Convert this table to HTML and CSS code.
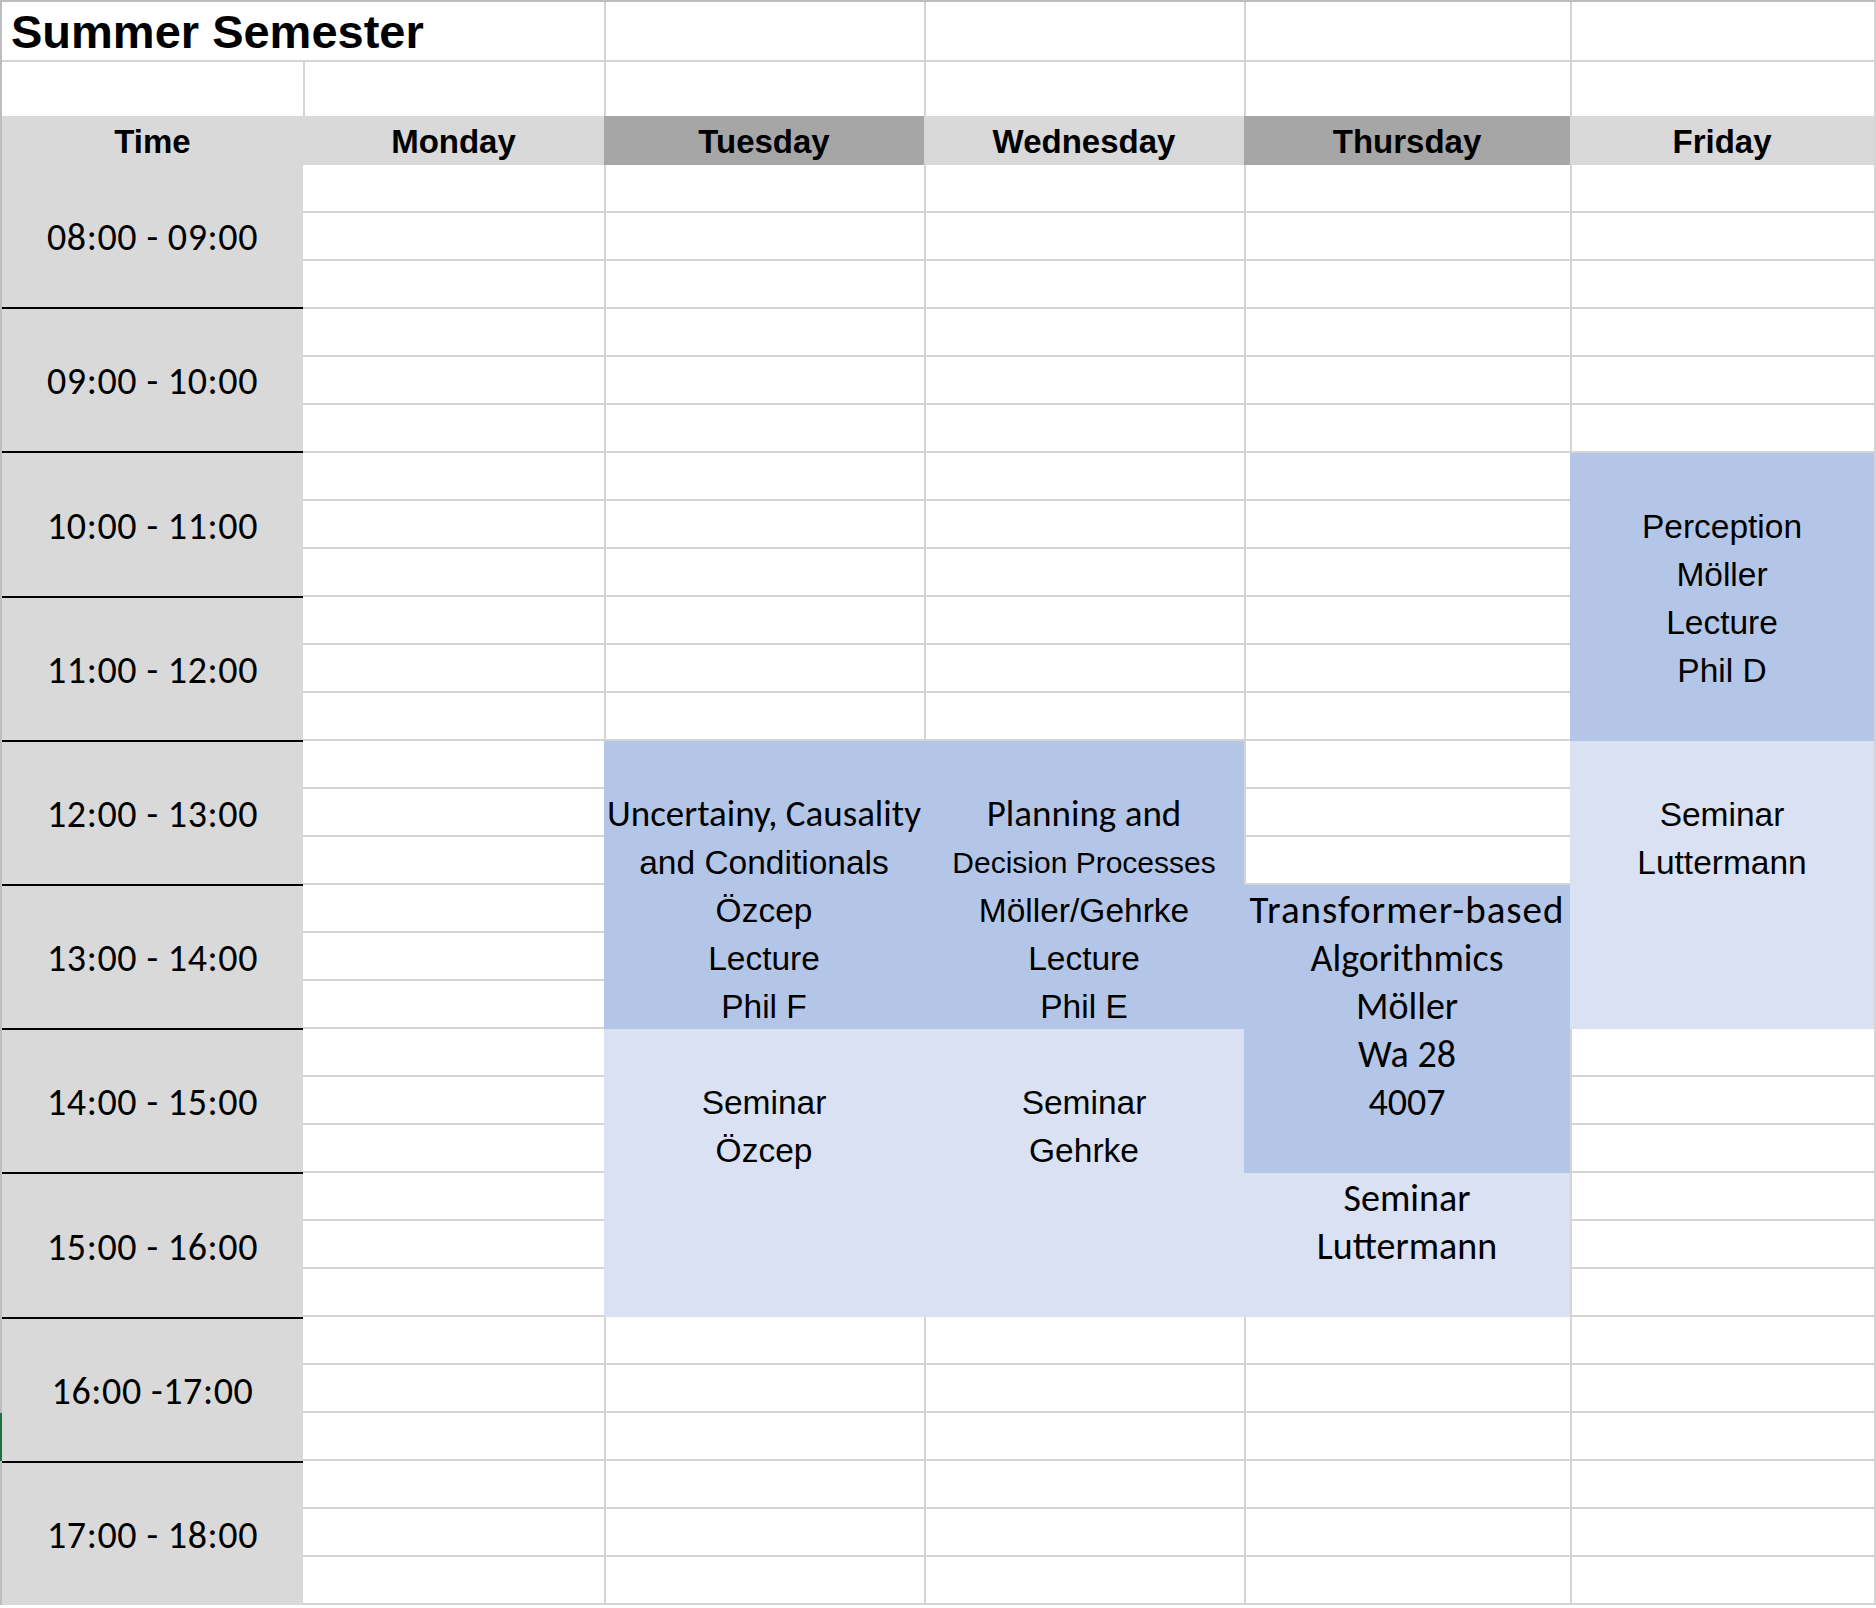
FILE: index.html
```html
<!DOCTYPE html>
<html lang="en">
<head>
<meta charset="utf-8">
<title>Summer Semester</title>
<link rel="stylesheet" href="styles.css">
</head>
<body>
<div class="sheet">
  <div class="edge"></div>
  <div class="edge-mark"></div>
  <div class="rcol"></div>

  <div class="title">Summer Semester</div>
  <div class="blank top"></div>
  <div class="blank top"></div>
  <div class="blank top"></div>
  <div class="blank top"></div>

  <div class="blank"></div>
  <div class="blank sep"></div>
  <div class="blank sep"></div>
  <div class="blank sep"></div>
  <div class="blank sep"></div>
  <div class="blank sep"></div>

  <div class="hd">Time</div>
  <div class="hd">Monday</div>
  <div class="hd dark">Tuesday</div>
  <div class="hd">Wednesday</div>
  <div class="hd dark">Thursday</div>
  <div class="hd">Friday</div>

  <div class="times">
    <div class="slot">08:00 - 09:00</div>
    <div class="slot">09:00 - 10:00</div>
    <div class="slot">10:00 - 11:00</div>
    <div class="slot">11:00 - 12:00</div>
    <div class="slot">12:00 - 13:00</div>
    <div class="slot">13:00 - 14:00</div>
    <div class="slot">14:00 - 15:00</div>
    <div class="slot">15:00 - 16:00</div>
    <div class="slot">16:00 -17:00</div>
    <div class="slot">17:00 - 18:00</div>
  </div>

  <div class="day mon"></div>
  <div class="day tue"></div>
  <div class="day wed"></div>
  <div class="day thu"></div>
  <div class="day fri"></div>

  <div class="ev dark fri-lec">
    <span class="ar">Perception</span>
    <span class="ar">Möller</span>
    <span class="ar">Lecture</span>
    <span class="ar">Phil D</span>
  </div>
  <div class="ev light fri-sem">
    <span class="ar">Seminar</span>
    <span class="ar">Luttermann</span>
  </div>
  <div class="ev dark tue-lec">
    <span class="cal">Uncertainy, Causality</span>
    <span class="ar">and Conditionals</span>
    <span class="ar">Özcep</span>
    <span class="ar">Lecture</span>
    <span class="ar">Phil F</span>
  </div>
  <div class="ev dark wed-lec">
    <span class="cal">Planning and</span>
    <span class="ar sm">Decision Processes</span>
    <span class="ar">Möller/Gehrke</span>
    <span class="ar">Lecture</span>
    <span class="ar">Phil E</span>
  </div>
  <div class="ev light tue-sem">
    <span class="ar">Seminar</span>
    <span class="ar">Özcep</span>
  </div>
  <div class="ev light wed-sem">
    <span class="ar">Seminar</span>
    <span class="ar">Gehrke</span>
  </div>
  <div class="ev dark thu-lec">
    <span class="cal wide">Transformer-based</span>
    <span class="cal big">Algorithmics</span>
    <span class="cal big">Möller</span>
    <span class="cal big">Wa 28</span>
    <span class="cal big">4007</span>
  </div>
  <div class="ev light thu-sem">
    <span class="cal big">Seminar</span>
    <span class="cal big">Luttermann</span>
  </div>
</div>
</body>
</html>
```
FILE: styles.css
```css
* {
  box-sizing: border-box;
}

html,
body {
  margin: 0;
  background: #ffffff;
}

body {
  font-family: "Liberation Sans", Arial, sans-serif;
  color: #000000;
}

.sheet {
  display: grid;
  width: 1876px;
  grid-template-columns: 2px 301px 301px 320px 320px 326px 304px 2px;
  grid-template-rows: 60px 54px 49px repeat(30, 48px);
  border-top: 2px solid #bdbdbd;
}

.edge {
  grid-column: 1;
  grid-row: 1 / -1;
  background: #bdbdbd;
}

.edge-mark {
  grid-column: 1;
  grid-row: 30;
  background: #1f7244;
}

.rcol {
  grid-column: 8;
  grid-row: 1 / -1;
  background: #d4d4d4;
}

.title {
  grid-column: span 2;
  display: flex;
  align-items: center;
  padding-left: 9px;
  font-weight: 700;
  font-size: 47px;
  border-bottom: 2px solid #d4d4d4;
}

.blank.top {
  border-left: 2px solid #d4d4d4;
  border-bottom: 2px solid #d4d4d4;
}

.blank.sep {
  border-left: 2px solid #d4d4d4;
}

.hd {
  display: flex;
  align-items: center;
  justify-content: center;
  background: #d9d9d9;
  font-weight: 700;
  font-size: 33px;
  padding-top: 3px;
}

.hd.dark {
  background: #a6a6a6;
}

.times {
  grid-column: 2;
  grid-row: 4 / span 30;
  display: flex;
  flex-direction: column;
  background: #d9d9d9;
}

.slot {
  flex: 1;
  display: flex;
  align-items: center;
  justify-content: center;
  font-family: Carlito, Lato, "Open Sans", sans-serif;
  font-size: 38px;
  letter-spacing: 0.6px;
  padding-top: 2px;
}

.slot + .slot {
  border-top: 2px solid #000000;
}

.day {
  grid-row: 4 / span 30;
  background: repeating-linear-gradient(to bottom, transparent 0 46px, #d4d4d4 46px 48px);
}

.day.mon { grid-column: 3; }
.day.tue { grid-column: 4; border-left: 2px solid #d4d4d4; }
.day.wed { grid-column: 5; border-left: 2px solid #d4d4d4; }
.day.thu { grid-column: 6; border-left: 2px solid #d4d4d4; }
.day.fri { grid-column: 7; border-left: 2px solid #d4d4d4; }

.ev {
  display: flex;
  flex-direction: column;
  align-items: center;
  white-space: nowrap;
  line-height: 48px;
}

.ev.dark {
  background: #b4c6e7;
}

.ev.light {
  background: #d9e1f2;
}

.ar {
  font-family: "Liberation Sans", Arial, sans-serif;
  font-size: 33.5px;
  position: relative;
  top: 2px;
}

.ar.sm {
  font-size: 30px;
}

.cal {
  font-family: Carlito, Lato, "Open Sans", sans-serif;
  font-size: 37px;
  position: relative;
  top: 1px;
}

.cal.big {
  font-size: 38px;
}

.cal.wide {
  font-size: 39px;
  letter-spacing: 1px;
}

.fri-lec {
  grid-column: 7;
  grid-row: 10 / span 6;
  justify-content: center;
}

.fri-sem {
  grid-column: 7;
  grid-row: 16 / span 6;
  padding-top: 48px;
}

.tue-lec {
  grid-column: 4;
  grid-row: 16 / span 6;
  justify-content: flex-end;
}

.wed-lec {
  grid-column: 5;
  grid-row: 16 / span 6;
  justify-content: flex-end;
}

.tue-sem {
  grid-column: 4;
  grid-row: 22 / span 6;
  padding-top: 48px;
}

.wed-sem {
  grid-column: 5;
  grid-row: 22 / span 6;
  padding-top: 48px;
}

.thu-lec {
  grid-column: 6;
  grid-row: 19 / span 6;
}

.thu-sem {
  grid-column: 6;
  grid-row: 25 / span 3;
}
```
